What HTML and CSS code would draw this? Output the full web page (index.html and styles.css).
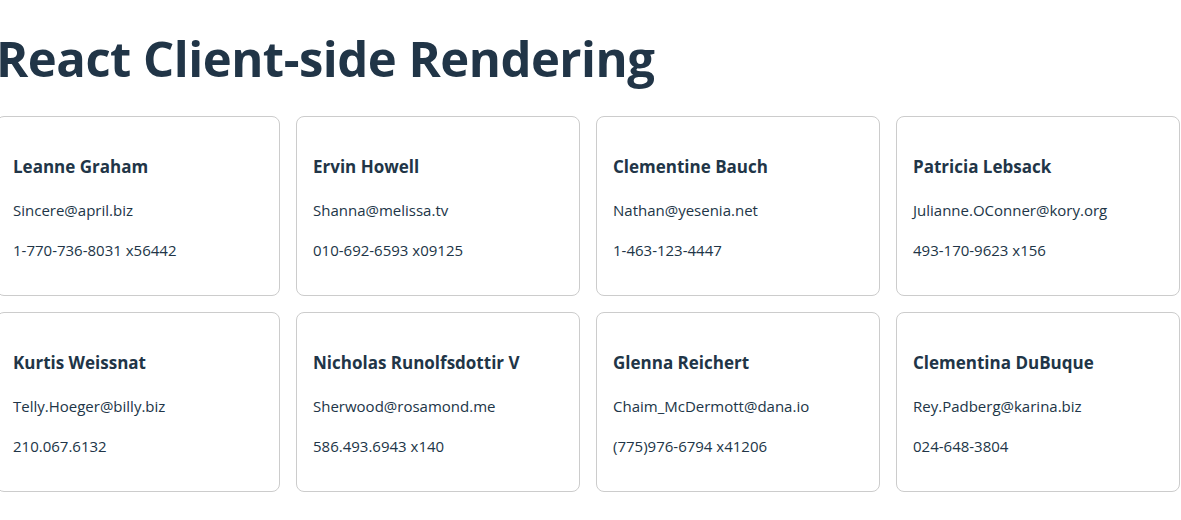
FILE: index.html
```html
<!DOCTYPE html>
<html lang="en">
<head>
<meta charset="utf-8">
<title>React Client-side Rendering</title>
<link rel="stylesheet" href="styles.css">
</head>
<body>
<div class="app">
  <h1 class="title">React Client-side Rendering</h1>
  <div class="grid">
    <div class="card"><h3 class="name">Leanne Graham</h3><p class="line">Sincere@april.biz</p><p class="line">1-770-736-8031 x56442</p></div>
    <div class="card"><h3 class="name">Ervin Howell</h3><p class="line">Shanna@melissa.tv</p><p class="line">010-692-6593 x09125</p></div>
    <div class="card"><h3 class="name">Clementine Bauch</h3><p class="line">Nathan@yesenia.net</p><p class="line">1-463-123-4447</p></div>
    <div class="card"><h3 class="name">Patricia Lebsack</h3><p class="line">Julianne.OConner@kory.org</p><p class="line">493-170-9623 x156</p></div>
    <div class="card"><h3 class="name">Kurtis Weissnat</h3><p class="line">Telly.Hoeger@billy.biz</p><p class="line">210.067.6132</p></div>
    <div class="card"><h3 class="name">Nicholas Runolfsdottir V</h3><p class="line">Sherwood@rosamond.me</p><p class="line">586.493.6943 x140</p></div>
    <div class="card"><h3 class="name">Glenna Reichert</h3><p class="line">Chaim_McDermott@dana.io</p><p class="line">(775)976-6794 x41206</p></div>
    <div class="card"><h3 class="name">Clementina DuBuque</h3><p class="line">Rey.Padberg@karina.biz</p><p class="line">024-648-3804</p></div>
  </div>
</div>
</body>
</html>
```

FILE: styles.css
```css
html, body {
  margin: 0;
  padding: 0;
  background: #ffffff;
}
body {
  font-family: "Open Sans", "Noto Sans", sans-serif;
  color: #213547;
  line-height: 1.5;
  font-size: 15px;
}
.app {
  margin-left: -4px;
  width: 1184px;
}
.title {
  font-size: 49px;
  font-weight: 700;
  margin: 22px 0 20px 0;
  line-height: 1.5;
  letter-spacing: -0.5px;
}
.grid {
  display: grid;
  grid-template-columns: repeat(4, 284px);
  gap: 16px;
}
.card {
  border: 1px solid #cccccc;
  border-radius: 8px;
  padding: 16px;
  height: 180px;
  box-sizing: border-box;
}
.name {
  font-size: 17px;
  font-weight: 700;
  margin: 21px 0 0 0;
  line-height: 1.5;
}
.line {
  margin: 16px 0 0 0;
  line-height: 24px;
}
.name + .line {
  margin-top: 19px;
}
```
